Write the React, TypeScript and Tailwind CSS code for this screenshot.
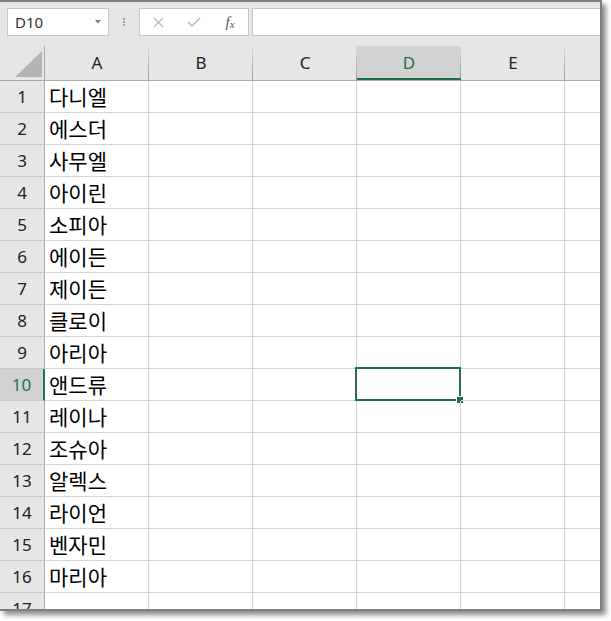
const names = [
  '다니엘', '에스더', '사무엘', '아이린', '소피아', '에이든', '제이든', '클로이',
  '아리아', '앤드류', '레이나', '조슈아', '알렉스', '라이언', '벤자민', '마리아', '',
];
const cols = ['A', 'B', 'C', 'D', 'E'];

const ui = { fontFamily: '"Noto Sans", "Open Sans", sans-serif' };
const ko = { fontFamily: '"Noto Sans CJK KR", "Noto Sans", sans-serif' };

function FormulaBar() {
  return (
    <div className="flex h-[44px] shrink-0 items-start bg-[#e6e6e6] pt-[6px]">
      <div className="ml-[7px] flex h-[28px] w-[102px] items-center justify-between border border-[#c6c6c6] bg-white pl-[7px] pr-[7px]">
        <span className="text-[15px] text-[#333]" style={ui}>D10</span>
        <svg width="6" height="4" viewBox="0 0 6 4">
          <path d="M0 0h6L3 3.5z" fill="#7a7a7a" />
        </svg>
      </div>
      <div className="flex h-[28px] w-[30px] flex-col items-center justify-center gap-[1px]">
        <span className="h-[2px] w-[2px] bg-[#a0a0a0]" />
        <span className="h-[2px] w-[2px] bg-[#a0a0a0]" />
        <span className="h-[2px] w-[2px] bg-[#a0a0a0]" />
      </div>
      <div className="flex h-[28px] w-[110px] items-center border border-[#c6c6c6] bg-white">
        <span className="flex w-[36px] justify-center">
          <svg width="11" height="11" viewBox="0 0 11 11">
            <path d="M1 1l9 9M10 1l-9 9" stroke="#bcbcbc" strokeWidth="1.4" />
          </svg>
        </span>
        <span className="flex w-[36px] justify-center">
          <svg width="14" height="10" viewBox="0 0 14 10">
            <path d="M1 5l4 4 8-8" stroke="#bcbcbc" strokeWidth="1.6" fill="none" />
          </svg>
        </span>
        <span
          className="flex w-[36px] justify-center text-[15px] italic leading-none text-[#555]"
          style={{ fontFamily: '"Liberation Serif", serif' }}
        >
          f<span className="text-[11px] leading-none self-end">x</span>
        </span>
      </div>
      <div className="ml-[3px] h-[28px] flex-1 border border-r-0 border-[#c6c6c6] bg-white" />
    </div>
  );
}

function HeaderRow() {
  return (
    <div className="flex h-[35px] shrink-0 border-b border-[#ababab] bg-[#e6e6e6]" style={ui}>
      <div className="relative w-[45px] shrink-0 border-r border-[#ababab]">
        <svg className="absolute bottom-[3px] right-[2px]" width="27" height="26" viewBox="0 0 27 26">
          <path d="M27 0V26H0z" fill="#b4b4b4" />
        </svg>
      </div>
      {cols.map((c) => {
        const sel = c === 'D';
        return (
          <div
            key={c}
            className={
              sel
                ? 'relative flex w-[104px] shrink-0 items-center justify-center border-b-2 border-[#217346] bg-[#d2d2d2] pt-[2px] text-[17px] text-[#217346]'
                : 'relative flex w-[104px] shrink-0 items-center justify-center text-[17px] text-[#222]'
            }
          >
            {c}
            <span className="absolute bottom-0 right-0 top-0 w-px bg-gradient-to-b from-[#dcdcdc] to-[#9c9c9c]" />
          </div>
        );
      })}
      <div className="flex-1" />
    </div>
  );
}

function Row({ n, name }: { n: number; name: string }) {
  const sel = n === 10;
  return (
    <div className="flex h-[32px] shrink-0">
      <div
        className={
          sel
            ? 'flex w-[45px] shrink-0 items-center justify-center border-b border-r-2 border-b-[#c8c8c8] border-r-[#217346] bg-[#d2d2d2] text-[17px] text-[#217346]'
            : 'flex w-[45px] shrink-0 items-center justify-center border-b border-r border-b-[#c8c8c8] border-r-[#ababab] bg-[#e6e6e6] text-[17px] text-[#222]'
        }
        style={ui}
      >
        {n}
      </div>
      {cols.map((c) => (
        <div key={c} className="relative flex w-[104px] shrink-0 items-center border-b border-r border-[#d4d4d4] pl-[4px]">
          {c === 'A' && (
            <span className="text-[21px] leading-none text-black" style={ko}>
              {name}
            </span>
          )}
          {sel && c === 'D' && (
            <div className="absolute -left-[2px] -top-[2px] h-[34px] w-[106px] border-2 border-[#217346]">
              <span className="absolute -bottom-[4px] -right-[4px] h-[6px] w-[6px] bg-[#217346] outline outline-1 outline-white" />
            </div>
          )}
        </div>
      ))}
      <div className="flex-1 border-b border-[#d4d4d4]" />
    </div>
  );
}

export default function App() {
  return (
    <div className="h-[621px] w-[611px] bg-white">
      <div className="flex h-[611px] w-[602px] flex-col overflow-hidden border-b-2 border-r-2 border-t-2 border-[#7f7f7f] shadow-[4px_4px_5px_rgba(0,0,0,0.45)]">
        <FormulaBar />
        <HeaderRow />
        <div className="flex flex-col overflow-hidden">
          {names.map((name, i) => (
            <Row key={i} n={i + 1} name={name} />
          ))}
        </div>
      </div>
    </div>
  );
}
